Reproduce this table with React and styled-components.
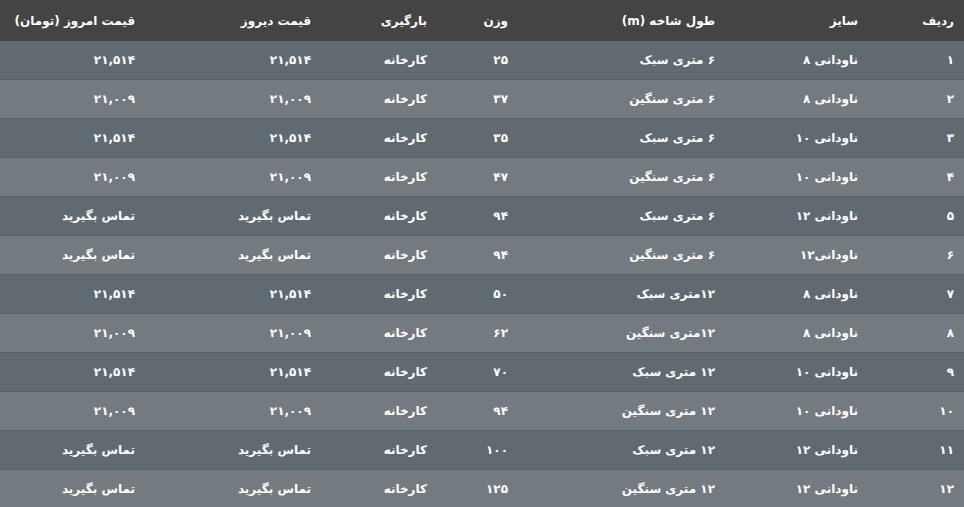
import styled, { createGlobalStyle } from 'styled-components';

const GlobalStyle = createGlobalStyle`
  html, body {
    margin: 0;
    padding: 0;
    background: #ffffff;
  }
`;

const Wrapper = styled.div`
  width: 964px;
  height: 507px;
  overflow: hidden;
  direction: rtl;
  font-family: "DejaVu Sans", "Noto Sans", sans-serif;
`;

const Table = styled.table`
  width: 964px;
  border-collapse: collapse;
  table-layout: fixed;
  color: #ffffff;
  font-size: 12px;
  font-weight: bold;
`;

const HeadCell = styled.th`
  background: #444444;
  height: 41px;
  padding: 0 10px;
  text-align: right;
  font-weight: bold;
  white-space: nowrap;
  width: ${props => props.w}px;
  box-sizing: border-box;
`;

const Row = styled.tr`
  background: ${props => (props.odd ? '#606a70' : '#737a80')};
  border-bottom: 1px solid #59626a;
`;

const Cell = styled.td`
  height: 38px;
  padding: 0 10px;
  text-align: right;
  white-space: nowrap;
`;

const cols = [
  { title: 'ردیف', w: 96 },
  { title: 'سایز', w: 143 },
  { title: 'طول شاخه (m)', w: 207 },
  { title: 'وزن', w: 81 },
  { title: 'بارگیری', w: 116 },
  { title: 'قیمت دیروز', w: 176 },
  { title: 'قیمت امروز (تومان)', w: 145 },
];

const low = '۲۱,۵۱۴';
const high = '۲۱,۰۰۹';
const call = 'تماس بگیرید';

const rows = [
  ['۱', 'ناودانی ۸', '۶ متری سبک', '۲۵', low],
  ['۲', 'ناودانی ۸', '۶ متری سنگین', '۳۷', high],
  ['۳', 'ناودانی ۱۰', '۶ متری سبک', '۳۵', low],
  ['۴', 'ناودانی ۱۰', '۶ متری سنگین', '۴۷', high],
  ['۵', 'ناودانی ۱۲', '۶ متری سبک', '۹۴', call],
  ['۶', 'ناودانی۱۲', '۶ متری سنگین', '۹۴', call],
  ['۷', 'ناودانی ۸', '۱۲متری سبک', '۵۰', low],
  ['۸', 'ناودانی ۸', '۱۲متری سنگین', '۶۲', high],
  ['۹', 'ناودانی ۱۰', '۱۲ متری سبک', '۷۰', low],
  ['۱۰', 'ناودانی ۱۰', '۱۲ متری سنگین', '۹۴', high],
  ['۱۱', 'ناودانی ۱۲', '۱۲ متری سبک', '۱۰۰', call],
  ['۱۲', 'ناودانی ۱۲', '۱۲ متری سنگین', '۱۲۵', call],
];

function App() {
  return (
    <Wrapper>
      <GlobalStyle />
      <Table>
        <thead>
          <tr>
            {cols.map(c => (
              <HeadCell key={c.title} w={c.w}>{c.title}</HeadCell>
            ))}
          </tr>
        </thead>
        <tbody>
          {rows.map((r, i) => (
            <Row key={r[0]} odd={i % 2 === 0}>
              <Cell>{r[0]}</Cell>
              <Cell>{r[1]}</Cell>
              <Cell>{r[2]}</Cell>
              <Cell>{r[3]}</Cell>
              <Cell>کارخانه</Cell>
              <Cell>{r[4]}</Cell>
              <Cell>{r[4]}</Cell>
            </Row>
          ))}
        </tbody>
      </Table>
    </Wrapper>
  );
}

export default App;
